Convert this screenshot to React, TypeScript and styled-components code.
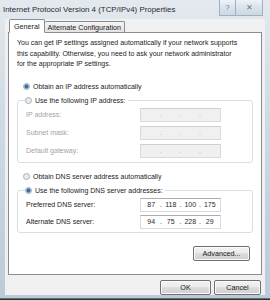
import styled, { createGlobalStyle } from 'styled-components';

const GlobalStyle = createGlobalStyle`
  html, body {
    margin: 0;
    padding: 0;
    background: #2f4a33;
  }
  body {
    font-family: 'Liberation Sans', Arial, sans-serif;
    font-size: 7px;
    color: #1b1b1b;
  }
`;

const Desktop = styled.div`
  width: 270px;
  height: 300px;
  overflow: hidden;
  background: linear-gradient(180deg, #4c6b4e 0%, #263b2a 100%);
`;

const Window = styled.div`
  height: 295px;
  display: flex;
  flex-direction: column;
  background: linear-gradient(180deg, #e3e9ee 0%, #cfdae3 40%, #bccbd8 100%);
  border-bottom: 1px solid #5d6d7c;
  padding: 0 5px 3px 5px;
`;

const TitleBar = styled.div`
  height: 21px;
  display: flex;
  align-items: flex-start;
  justify-content: space-between;
`;

const TitleText = styled.div`
  padding: 5px 0 0 0;
  margin-left: -2px;
  font-size: 7.9px;
  color: #2a2a2a;
  white-space: nowrap;
`;

const CaptionButtons = styled.div`
  display: flex;
  margin-right: 2px;
`;

const CaptionButton = styled.div<{ $w: number }>`
  width: ${({ $w }) => $w}px;
  height: 15px;
  display: flex;
  align-items: center;
  justify-content: center;
  border: 1px solid #9fb0c0;
  border-top: none;
  background: linear-gradient(180deg, #eef3f7 0%, #d9e3eb 50%, #cbd8e3 100%);
  color: #6b7c8c;
  font-size: 8px;
  & + & {
    border-left: none;
  }
`;

const Client = styled.div`
  flex: 1;
  display: flex;
  flex-direction: column;
  background: #f0f0f0;
  padding: 1px 3px 0 3px;
`;

const TabStrip = styled.div`
  display: flex;
  align-items: flex-end;
  height: 12px;
  padding-left: 1px;
  position: relative;
  z-index: 1;
`;

const Tab = styled.div<{ $active?: boolean }>`
  height: ${({ $active }) => ($active ? 12 : 10)}px;
  padding: 0 ${({ $active }) => ($active ? 4 : 3)}px;
  display: flex;
  align-items: center;
  border: 1px solid #898c95;
  border-bottom: ${({ $active }) => ($active ? '1px solid #ffffff' : 'none')};
  border-radius: 2px 2px 0 0;
  background: ${({ $active }) =>
    $active ? '#ffffff' : 'linear-gradient(180deg, #f4f4f4 0%, #e3e3e3 100%)'};
  margin-bottom: ${({ $active }) => ($active ? -1 : 0)}px;
  font-size: 7.2px;
  white-space: nowrap;
  & + & {
    border-left: none;
  }
`;

const Panel = styled.div`
  height: 236px;
  background: #ffffff;
  border: 1px solid #898c95;
  padding: 5px 8px 0 8px;
  display: flex;
  flex-direction: column;
`;

const Description = styled.p`
  margin: 0 0 10px 0;
  line-height: 10.5px;
  white-space: nowrap;
`;

const RadioRow = styled.label<{ $mt?: number }>`
  display: flex;
  align-items: center;
  height: 14px;
  gap: 3px;
  margin-top: ${({ $mt }) => $mt ?? 0}px;
  padding-left: 6px;
  white-space: nowrap;
`;

const RadioDot = styled.span<{ $checked?: boolean }>`
  width: 7px;
  height: 7px;
  flex: none;
  border-radius: 50%;
  box-sizing: border-box;
  border: 1px solid #a4acb6;
  background: ${({ $checked }) =>
    $checked
      ? 'radial-gradient(circle, #3a6ea5 0 1.6px, #8fb3d9 2.2px, #e8eef4 2.8px)'
      : 'radial-gradient(circle, #e9ecef 0 2px, #f6f7f8 3px)'};
`;

const Group = styled.fieldset<{ $pb: number; $gap: number }>`
  margin: 0;
  padding: 0 0 ${({ $pb }) => $pb}px 0;
  border: 1px solid #d5dfe5;
  border-radius: 3px;
  display: flex;
  flex-direction: column;
  gap: ${({ $gap }) => $gap}px;
`;

const Legend = styled.legend`
  padding: 0 2px 0 0;
  margin-left: 7px;
  height: 14px;
  display: flex;
  align-items: center;
  gap: 3px;
  white-space: nowrap;
  background: #ffffff;
`;

const FieldRow = styled.div`
  display: flex;
  align-items: center;
  height: 14px;
  padding-left: 8px;
`;

const FieldLabel = styled.span<{ $disabled?: boolean }>`
  width: 114px;
  color: ${({ $disabled }) => ($disabled ? '#a3a3a3' : '#1b1b1b')};
  white-space: nowrap;
`;

const IpBox = styled.div<{ $disabled?: boolean }>`
  width: 81px;
  height: 14px;
  box-sizing: border-box;
  display: flex;
  align-items: center;
  border: 1px solid ${({ $disabled }) => ($disabled ? '#dadada' : '#d7dbe0')};
  border-top-color: ${({ $disabled }) => ($disabled ? '#d0d0d0' : '#abadb3')};
  background: ${({ $disabled }) => ($disabled ? '#f0f0f0' : '#ffffff')};
  color: ${({ $disabled }) => ($disabled ? '#a8a8a8' : '#2b2b2b')};
  padding: 0 2px;
`;

const Octet = styled.span`
  flex: 1;
  text-align: center;
`;

const Dot = styled.span`
  width: 3px;
  text-align: center;
`;

const PanelFooter = styled.div`
  display: flex;
  justify-content: flex-end;
  padding-right: 3px;
  margin-top: 13px;
`;

const Button = styled.button<{ $w: number }>`
  width: ${({ $w }) => $w}px;
  height: 15px;
  padding: 0;
  font-family: inherit;
  font-size: 7.2px;
  color: #1b1b1b;
  border: 1px solid #707070;
  border-radius: 2px;
  background: linear-gradient(180deg, #f2f2f2 0%, #ebebeb 49%, #dddddd 50%, #cfcfcf 100%);
  box-shadow: inset 0 0 0 1px #fbfbfb;
`;

const DialogFooter = styled.div`
  display: flex;
  justify-content: flex-end;
  gap: 3px;
  margin-top: 5px;
  padding-right: 1px;
`;

interface IpFieldProps {
  values?: string[];
  disabled?: boolean;
}

function IpField({ values = ['', '', '', ''], disabled }: IpFieldProps) {
  return (
    <IpBox $disabled={disabled}>
      {values.flatMap((v, i) => [
        i > 0 ? <Dot key={`d${i}`}>.</Dot> : null,
        <Octet key={`o${i}`}>{v}</Octet>,
      ])}
    </IpBox>
  );
}

export default function App() {
  return (
    <Desktop>
      <GlobalStyle />
      <Window>
        <TitleBar>
          <TitleText>Internet Protocol Version 4 (TCP/IPv4) Properties</TitleText>
          <CaptionButtons>
            <CaptionButton $w={15}>?</CaptionButton>
            <CaptionButton $w={26}>✕</CaptionButton>
          </CaptionButtons>
        </TitleBar>
        <Client>
          <TabStrip>
            <Tab $active>General</Tab>
            <Tab>Alternate Configuration</Tab>
          </TabStrip>
          <Panel>
            <Description>
              You can get IP settings assigned automatically if your network supports
              <br />
              this capability. Otherwise, you need to ask your network administrator
              <br />
              for the appropriate IP settings.
            </Description>
            <RadioRow>
              <RadioDot $checked />
              Obtain an IP address automatically
            </RadioRow>
            <Group $pb={4} $gap={4}>
              <Legend>
                <RadioDot />
                Use the following IP address:
              </Legend>
              <FieldRow>
                <FieldLabel $disabled>IP address:</FieldLabel>
                <IpField disabled />
              </FieldRow>
              <FieldRow>
                <FieldLabel $disabled>Subnet mask:</FieldLabel>
                <IpField disabled />
              </FieldRow>
              <FieldRow>
                <FieldLabel $disabled>Default gateway:</FieldLabel>
                <IpField disabled />
              </FieldRow>
            </Group>
            <RadioRow $mt={7}>
              <RadioDot />
              Obtain DNS server address automatically
            </RadioRow>
            <Group $pb={3} $gap={3}>
              <Legend>
                <RadioDot $checked />
                Use the following DNS server addresses:
              </Legend>
              <FieldRow>
                <FieldLabel>Preferred DNS server:</FieldLabel>
                <IpField values={['87', '118', '100', '175']} />
              </FieldRow>
              <FieldRow>
                <FieldLabel>Alternate DNS server:</FieldLabel>
                <IpField values={['94', '75', '228', '29']} />
              </FieldRow>
            </Group>
            <PanelFooter>
              <Button $w={57}>Advanced...</Button>
            </PanelFooter>
          </Panel>
          <DialogFooter>
            <Button $w={51}>OK</Button>
            <Button $w={47}>Cancel</Button>
          </DialogFooter>
        </Client>
      </Window>
    </Desktop>
  );
}
